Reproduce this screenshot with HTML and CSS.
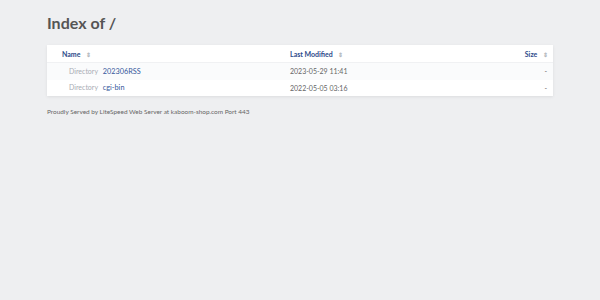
FILE: index.html
```html
<!DOCTYPE html>
<html lang="en">
<head>
  <meta charset="UTF-8" />
  <title>Index of /</title>
  <link rel="stylesheet" href="styles.css">
</head>
<body>
  <h1>Index of /</h1>
  <div class="listing">
    <table>
      <thead>
        <tr>
          <th class="col-name"><a href="#">Name</a> <span class="sort">&#8661;</span></th>
          <th class="col-date"><a href="#">Last Modified</a> <span class="sort">&#8661;</span></th>
          <th class="col-size"><a href="#">Size</a> <span class="sort">&#8661;</span></th>
        </tr>
      </thead>
      <tbody>
        <tr class="odd">
          <td class="col-name"><span class="type">Directory</span> <a href="#">202306RSS</a></td>
          <td class="col-date">2023-05-29 11:41</td>
          <td class="col-size">-</td>
        </tr>
        <tr>
          <td class="col-name"><span class="type">Directory</span> <a href="#">cgi-bin</a></td>
          <td class="col-date">2022-05-05 03:16</td>
          <td class="col-size">-</td>
        </tr>
      </tbody>
    </table>
  </div>
  <p class="footer">Proudly Served by LiteSpeed Web Server at kaboom-shop.com Port 443</p>
</body>
</html>
```

FILE: styles.css
```css
body {
  margin: 0;
  padding: 0 47px;
  background: #eeeff1;
  color: #555;
  font-family: Lato, "Liberation Sans", sans-serif;
}

h1 {
  margin: 0;
  padding-top: 13px;
  height: 32px;
  font-size: 16px;
  font-weight: 700;
  color: #555;
}

.listing {
  background: #fff;
  box-shadow: 0 1px 3px rgba(0, 0, 0, 0.08);
  width: 506px;
}

table {
  width: 100%;
  border-collapse: collapse;
  table-layout: fixed;
  font-size: 7px;
}

th {
  height: 17px;
  padding: 0;
  font-weight: 700;
  text-align: left;
  border-bottom: 1px solid #f0f1f3;
}

td {
  height: 16.5px;
  padding: 0;
  color: #666;
}

a {
  color: #35579b;
  text-decoration: none;
}

td a {
  font-size: 7.3px;
}

th a {
  color: #2d4a8a;
}

.odd td {
  background: #fafbfc;
}

.col-name {
  padding-left: 15px;
  width: 228px;
}

td.col-name {
  padding-left: 22px;
  width: 221px;
}

.type {
  color: #a8acb4;
  margin-right: 3px;
}

.col-date {
  width: 200px;
}

.col-size {
  text-align: right;
  padding-right: 5px;
}

td.col-size {
  padding-right: 6px;
}

.sort {
  color: #b0b4bb;
  font-size: 6px;
  margin-left: 4px;
}

.footer {
  margin: 12px 0 0;
  font-size: 6.45px;
  color: #666;
}
```
